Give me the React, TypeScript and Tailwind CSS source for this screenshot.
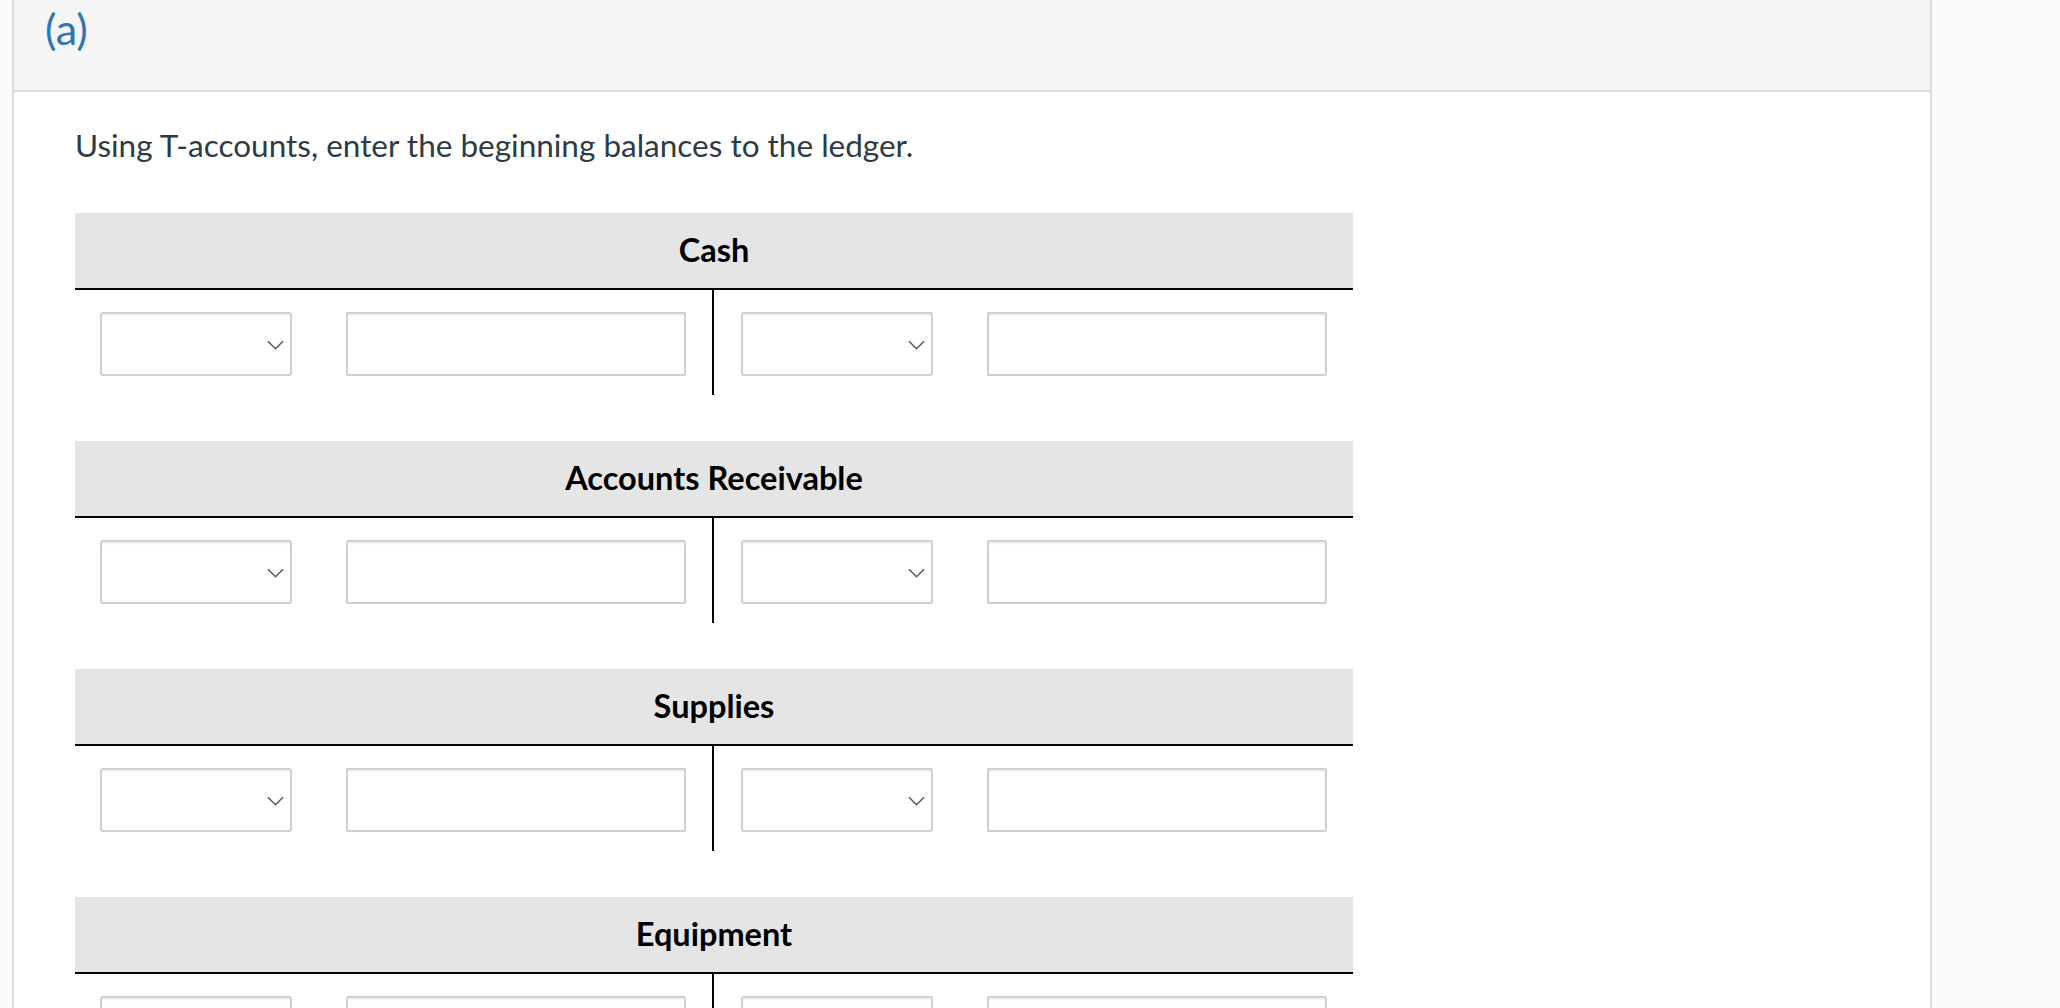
/** T-account ledger entry panel: part header, prompt, and one T per account. */
const accounts = ["Cash", "Accounts Receivable", "Supplies", "Equipment"];

function Chevron() {
  return (
    <svg
      viewBox="0 0 18 10"
      className="pointer-events-none absolute right-[8px] top-[28px] h-[10px] w-[17px]"
      fill="none"
      stroke="#5a5a5a"
      strokeWidth="1.6"
    >
      <path d="M1 1l8 8 8-8" />
    </svg>
  );
}

function Side() {
  return (
    <div className="flex items-center gap-[54px]">
      <div className="relative h-[64px] w-[192px]">
        <select className="h-full w-full appearance-none rounded-[3px] border-2 border-[#d0d0d0] bg-white shadow-[inset_0_2px_2px_rgba(0,0,0,0.06)] outline-none" />
        <Chevron />
      </div>
      <input
        type="text"
        className="h-[64px] w-[340px] rounded-[2px] border-2 border-[#cfcfcf] bg-white shadow-[inset_0_2px_2px_rgba(0,0,0,0.06)] outline-none"
      />
    </div>
  );
}

function TAccount({ name }: { name: string }) {
  return (
    <div className="w-[1278px]">
      <div className="flex h-[77px] items-center justify-center border-b-2 border-black bg-[#e5e5e5]">
        <span className="text-[32.5px] font-bold text-black">{name}</span>
      </div>
      <div className="flex">
        <div className="flex w-[637px] pb-[19px] pl-[25px] pt-[22px]">
          <Side />
        </div>
        <div className="w-[2px] bg-black" />
        <div className="flex w-[639px] pb-[19px] pl-[27px] pt-[22px]">
          <Side />
        </div>
      </div>
    </div>
  );
}

export default function App() {
  return (
    <div className="flex min-h-screen bg-[#fafafa] font-['Lato',sans-serif]">
      <div className="ml-[12px] w-[1920px] border-x-2 border-[#dcdcdc] bg-white">
        <div className="h-[92px] border-b-2 border-[#dddddd] bg-[#f5f5f5] pl-[31px]">
          <span className="text-[43px] leading-[58px] text-[#2e75b2]">(a)</span>
        </div>
        <div className="pl-[61px]">
          <p className="mt-[33px] text-[31.5px] leading-[40px] text-[#2d3b45]">
            Using T-accounts, enter the beginning balances to the ledger.
          </p>
          <div className="mt-[48px] flex flex-col gap-[46px]">
            {accounts.map((a) => (
              <TAccount key={a} name={a} />
            ))}
          </div>
        </div>
      </div>
    </div>
  );
}
